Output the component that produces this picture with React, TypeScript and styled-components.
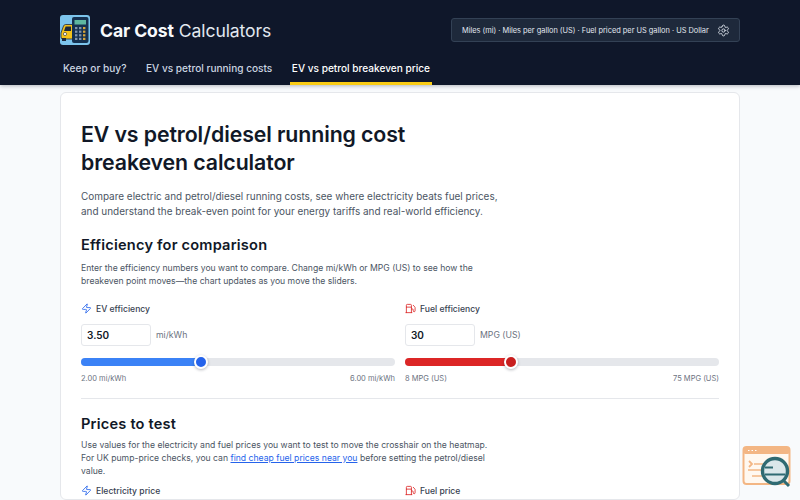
import * as React from 'react'
import styled, { createGlobalStyle } from 'styled-components'
import { Zap, Fuel, Settings } from 'lucide-react'

const GlobalStyle = createGlobalStyle`
    html, body {
        margin: 0;
        height: 500px;
        overflow: hidden;
        background: #f8fafc;
        font-family: Inter, "Liberation Sans", sans-serif;
        color: #111827;
    }
    * { box-sizing: border-box; }
`

const Header = styled.header`
    height: 85px;
    background: #0f172a;
    padding: 0 60px;
    box-shadow: 0 1px 4px rgba(15, 23, 42, 0.3);
`

const TopRow = styled.div`
    height: 51px;
    padding-top: 15px;
    display: flex;
    align-items: flex-start;
    justify-content: space-between;
`

const Brand = styled.div`
    display: flex;
    align-items: center;
    gap: 10px;
    height: 30px;
    color: #f8fafc;
    font-size: 17.6px;
    letter-spacing: -0.1px;
    b { font-weight: 700; }
    span { font-weight: 400; color: #e2e8f0; }
`

const UnitsButton = styled.div`
    margin-top: 3px;
    width: 289px;
    height: 24px;
    display: flex;
    align-items: center;
    justify-content: space-between;
    padding: 0 9px 0 10px;
    background: #1e293b;
    border: 1px solid #334155;
    border-radius: 3px;
    color: #e2e8f0;
    font-size: 7.4px;
    white-space: nowrap;
`

const Nav = styled.nav`
    display: flex;
    gap: 15.5px;
    height: 34px;
    margin-left: 1px;
`

const NavItem = styled.a<{ $active?: boolean }>`
    height: 34px;
    display: flex;
    align-items: center;
    padding: 3px 2px 0;
    font-size: 10.1px;
    font-weight: 500;
    color: ${(p) => (p.$active ? '#ffffff' : '#cbd5e1')};
    border-bottom: 3px solid ${(p) => (p.$active ? '#facc15' : 'transparent')};
`

const Card = styled.main`
    margin: 7px 60px 0;
    padding: 27px 20px 0;
    background: #ffffff;
    border: 1px solid #e5e7eb;
    border-radius: 6px;
    height: 408px;
    overflow: hidden;
`

const Title = styled.h1`
    margin: 0 0 13px;
    max-width: 400px;
    font-size: 21.3px;
    line-height: 28px;
    font-weight: 600;
    color: #111827;
    letter-spacing: -0.1px;
`

const Intro = styled.p`
    margin: 0 0 16px;
    max-width: 430px;
    font-size: 9.95px;
    line-height: 15px;
    color: #4b5563;
`

const SectionTitle = styled.h2<{ $gap: number }>`
    margin: 0 0 ${(p) => p.$gap}px;
    font-size: 14.6px;
    line-height: 20px;
    font-weight: 600;
    color: #111827;
    letter-spacing: 0.2px;
`

const Help = styled.p<{ $after: number }>`
    margin: 0 0 ${(p) => p.$after}px;
    max-width: 420px;
    font-size: 8.65px;
    line-height: 13px;
    color: #4b5563;
    a { color: #2563eb; text-decoration: underline; }
`

const Columns = styled.div`
    display: grid;
    grid-template-columns: 1fr 1fr;
    gap: 10px;
`

const Label = styled.div`
    display: flex;
    align-items: center;
    gap: 4px;
    height: 13px;
    margin-bottom: 9px;
    font-size: 8.6px;
    font-weight: 500;
    color: #374151;
`

const InputRow = styled.div`
    display: flex;
    align-items: center;
    gap: 5px;
    margin-bottom: 12px;
    color: #6b7280;
    font-size: 8.7px;
`

const NumberBox = styled.div`
    width: 70px;
    height: 22px;
    display: flex;
    align-items: center;
    padding-left: 5px;
    background: #fff;
    border: 1px solid #e5e7eb;
    border-radius: 3px;
    color: #111827;
    font-size: 10px;
    font-weight: 600;
`

const Track = styled.div`
    position: relative;
    height: 8px;
    border-radius: 4px;
    background: #e5e7eb;
`

const Fill = styled.div<{ $color: string }>`
    height: 100%;
    border-radius: 4px;
    background: ${(p) => p.$color};
`

const Thumb = styled.div<{ $color: string }>`
    position: absolute;
    top: 50%;
    width: 14px;
    height: 14px;
    border-radius: 50%;
    transform: translate(-50%, -50%);
    background: ${(p) => p.$color};
    border: 2px solid #fff;
    box-shadow: 0 1px 3px rgba(15, 23, 42, 0.3);
`

const Ends = styled.div`
    display: flex;
    justify-content: space-between;
    margin-top: 7px;
    font-size: 7.5px;
    line-height: 11px;
    color: #6b7280;
`

const Divider = styled.hr`
    margin: 14px 0 15px;
    border: 0;
    border-top: 1px solid #e5e7eb;
`

const Widget = styled.div`
    position: fixed;
    left: 742px;
    top: 445px;
    width: 50px;
    height: 44px;
`

const Logo = () => (
    <svg width="30" height="30" viewBox="0 0 30 30">
        <rect width="30" height="30" rx="3" fill="#7cc4ec" />
        <path d="M1 18l2.5-7q.6-1.5 2.2-1.5H14V24H3q-2 0-2-2z" fill="#f3c21b" stroke="#1e293b" strokeWidth="0.8" />
        <path d="M4 16l1.6-4.4h5.4V16z" fill="#1e293b" />
        <circle cx="5" cy="19" r="1.6" fill="#fff" stroke="#1e293b" strokeWidth="0.6" />
        <rect x="2" y="23" width="4" height="3" fill="#1e293b" />
        <rect x="12" y="2" width="16.5" height="26" rx="2" fill="#15304f" />
        <rect x="14.5" y="5" width="11.5" height="4.5" fill="#5eb6a0" />
        {[0, 1, 2, 3].map((r) =>
            [0, 1, 2].map((c) => (
                <rect key={`${r}-${c}`} x={15 + c * 4} y={12 + r * 3.6} width="2.4" height="2.2" fill={c === 2 ? '#d6a53a' : '#7f93ad'} />
            ))
        )}
    </svg>
)

const SiteWidget = () => (
    <svg width="50" height="44" viewBox="0 0 50 44">
        <rect x="1.5" y="2" width="46" height="37" rx="3" fill="#fff8f0" stroke="#f3b684" strokeWidth="2" />
        <rect x="1.5" y="2" width="46" height="7" rx="2" fill="#f3b684" />
        <path d="M6 5.5h1.5M9.5 5.5H11M13 5.5h1.5" stroke="#fff" strokeWidth="1" />
        <path d="M7 16l3 3-3 3" fill="none" stroke="#f3b684" strokeWidth="1.8" />
        <path d="M12 19h10M6 25h18M10 31h14" stroke="#f3b684" strokeWidth="1.6" />
        <circle cx="33" cy="26" r="12.5" fill="#dbe7ea" stroke="#2f6a72" strokeWidth="3.4" />
        <path d="M23 22.5h8M23 29.5h20" stroke="#2f6a72" strokeWidth="2" />
        <path d="M42 36l5 5" stroke="#2f6a72" strokeWidth="3" />
    </svg>
)

const Slider = ({ value, min, max, color, knob }: { value: number; min: string; max: string; color: string; knob: string }) => (
    <>
        <Track>
            <Fill $color={color} style={{ width: `${value}%` }} />
            <Thumb $color={knob} style={{ left: `${value}%` }} />
        </Track>
        <Ends>
            <span>{min}</span>
            <span>{max}</span>
        </Ends>
    </>
)

const App = () => (
    <>
        <GlobalStyle />
        <Header>
            <TopRow>
                <Brand>
                    <Logo />
                    <div>
                        <b>Car Cost</b> <span>Calculators</span>
                    </div>
                </Brand>
                <UnitsButton>
                    Miles (mi) · Miles per gallon (US) · Fuel priced per US gallon · US Dollar
                    <Settings size={13} strokeWidth={1.6} color="#e2e8f0" />
                </UnitsButton>
            </TopRow>
            <Nav>
                <NavItem>Keep or buy?</NavItem>
                <NavItem>EV vs petrol running costs</NavItem>
                <NavItem $active>EV vs petrol breakeven price</NavItem>
            </Nav>
        </Header>
        <Card>
            <Title>EV vs petrol/diesel running cost breakeven calculator</Title>
            <Intro>
                Compare electric and petrol/diesel running costs, see where electricity beats fuel prices, and understand the
                break-even point for your energy tariffs and real-world efficiency.
            </Intro>
            <SectionTitle $gap={7}>Efficiency for comparison</SectionTitle>
            <Help $after={14}>
                Enter the efficiency numbers you want to compare. Change mi/kWh or MPG (US) to see how the breakeven point
                moves—the chart updates as you move the sliders.
            </Help>
            <Columns>
                <div>
                    <Label>
                        <Zap size={11} strokeWidth={1.8} color="#2563eb" /> EV efficiency
                    </Label>
                    <InputRow>
                        <NumberBox>3.50</NumberBox> mi/kWh
                    </InputRow>
                    <Slider value={38.2} min="2.00 mi/kWh" max="6.00 mi/kWh" color="#3b82f6" knob="#2563eb" />
                </div>
                <div>
                    <Label>
                        <Fuel size={11} strokeWidth={1.8} color="#dc2626" /> Fuel efficiency
                    </Label>
                    <InputRow>
                        <NumberBox>30</NumberBox> MPG (US)
                    </InputRow>
                    <Slider value={33.8} min="8 MPG (US)" max="75 MPG (US)" color="#dc2626" knob="#c81e1e" />
                </div>
            </Columns>
            <Divider />
            <SectionTitle $gap={5}>Prices to test</SectionTitle>
            <Help $after={6}>
                Use values for the electricity and fuel prices you want to test to move the crosshair on the heatmap. For UK
                pump-price checks, you can <a>find cheap fuel prices near you</a> before setting the petrol/diesel value.
            </Help>
            <Columns>
                <Label>
                    <Zap size={11} strokeWidth={1.8} color="#2563eb" /> Electricity price
                </Label>
                <Label>
                    <Fuel size={11} strokeWidth={1.8} color="#dc2626" /> Fuel price
                </Label>
            </Columns>
        </Card>
        <Widget>
            <SiteWidget />
        </Widget>
    </>
)

export default App
